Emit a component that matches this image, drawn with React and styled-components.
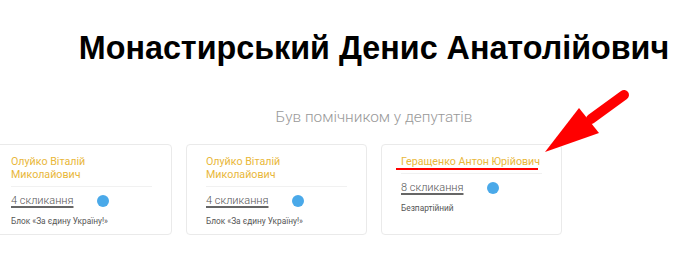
import React from "react";
import styled, { createGlobalStyle } from "styled-components";

const GlobalStyle = createGlobalStyle`
  html, body {
    margin: 0;
    padding: 0;
    background: #fff;
    overflow: hidden;
  }
  body {
    font-family: "Liberation Sans", Arial, sans-serif;
  }
`;

const deputies = [
  { name: "Олуйко Віталій Миколайович", convocation: "4 скликання", party: "Блок «За єдину Україну!»" },
  { name: "Олуйко Віталій Миколайович", convocation: "4 скликання", party: "Блок «За єдину Україну!»" },
  { name: "Геращенко Антон Юрійович", convocation: "8 скликання", party: "Безпартійний", marked: true },
];

const App = () => {
  return (
    <Page>
      <GlobalStyle />
      <Header>
        <Title>Монастирський Денис Анатолійович</Title>
        <Subtitle>Був помічником у депутатів</Subtitle>
      </Header>
      <Cards>
        {deputies.map((d, i) => (
          <Card key={i}>
            <Name $marked={d.marked}>{d.name}</Name>
            <Divider />
            <ConvocationRow>
              <Convocation href="#">{d.convocation}</Convocation>
              <Dot />
            </ConvocationRow>
            <Party>{d.party}</Party>
          </Card>
        ))}
      </Cards>
      {/* red annotation arrow pointing at the marked deputy */}
      <Arrow viewBox="0 0 90 80" width="90" height="80">
        <path d="M79 23 L46 47" stroke="#ff0000" strokeWidth="10" strokeLinecap="round" />
        <polygon points="0,80 34,36 54,61" fill="#ff0000" />
      </Arrow>
    </Page>
  );
};

const Page = styled.div`
  position: relative;
  width: 689px;
  height: 273px;
  margin-left: -9px;
  padding-top: 30px;
  box-sizing: border-box;
`;

const Header = styled.div`
  padding-left: 77px;
`;

const Title = styled.h1`
  margin: 0;
  text-align: center;
  white-space: nowrap;
  font-size: 32.3px;
  line-height: 37px;
  font-weight: 700;
  color: #000;
`;

const Subtitle = styled.h2`
  margin: 40px 0 0;
  text-align: center;
  font-family: Roboto, "Liberation Sans", sans-serif;
  font-size: 15.4px;
  line-height: 20px;
  font-weight: 300;
  color: #999;
`;

const Cards = styled.div`
  display: grid;
  grid-template-columns: repeat(3, 181px);
  gap: 14px;
  margin-top: 17px;
`;

const Card = styled.div`
  box-sizing: border-box;
  height: 91px;
  padding: 9.5px 19px 0;
  border: 1px solid #eaeaea;
  border-radius: 4px;
  background: #fff;
  font-family: Roboto, "Liberation Sans", sans-serif;
`;

const Name = styled.div`
  position: relative;
  font-size: 10.7px;
  line-height: 13px;
  color: #e9b73a;

  ${({ $marked }) =>
    $marked &&
    `
    &::after {
      content: "";
      position: absolute;
      left: -5px;
      right: 4px;
      bottom: -2.5px;
      height: 2px;
      background: #ff0000;
    }
  `}
`;

const Divider = styled.div`
  height: 1px;
  background: #f1f1f1;
  margin: 5.5px 0 6.5px;
`;

const ConvocationRow = styled.div`
  display: flex;
  align-items: center;
  height: 14px;
`;

const Convocation = styled.a`
  width: 86px;
  font-size: 11px;
  line-height: 14px;
  font-weight: 300;
  color: #555;
  text-decoration: underline;
  text-decoration-color: #666;
  text-decoration-thickness: 2px;
  text-underline-offset: 2px;
`;

const Dot = styled.span`
  width: 12px;
  height: 12px;
  border-radius: 50%;
  background: #4aa9e9;
`;

const Party = styled.div`
  margin-top: 8px;
  font-size: 8.3px;
  line-height: 10px;
  color: #555;
`;

const Arrow = styled.svg`
  position: absolute;
  left: 554px;
  top: 72px;
`;

export default App;
